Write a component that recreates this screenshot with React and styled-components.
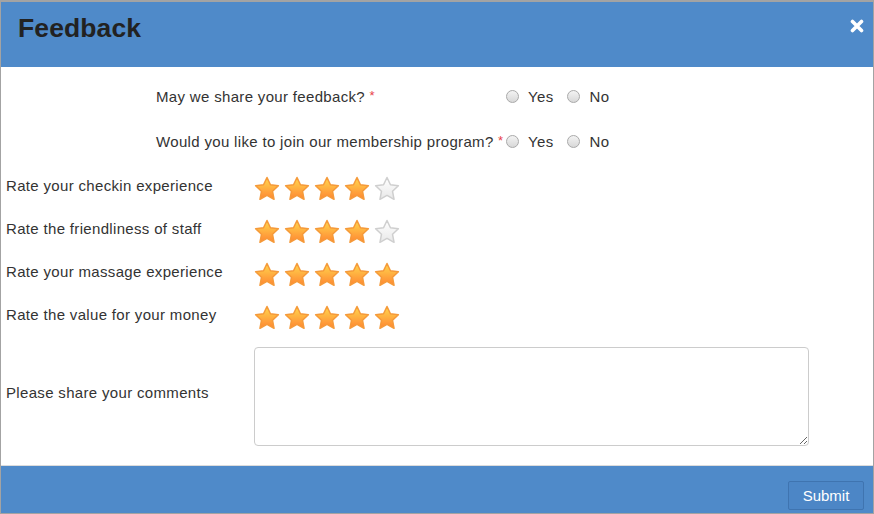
import React, { useState } from 'react';
import styled, { createGlobalStyle } from 'styled-components';

const GlobalStyle = createGlobalStyle`
    html, body {
        margin: 0;
        padding: 0;
        background: #fff;
    }
    body {
        font-family: "Liberation Sans", Arial, sans-serif;
        color: #333;
    }
`;

const questions = [
    { id: 'share', text: 'May we share your feedback?' },
    { id: 'member', text: 'Would you like to join our membership program?' },
];

const ratings = [
    { id: 'checkin', text: 'Rate your checkin experience', value: 4 },
    { id: 'staff', text: 'Rate the friendliness of staff', value: 4 },
    { id: 'massage', text: 'Rate your massage experience', value: 5 },
    { id: 'money', text: 'Rate the value for your money', value: 5 },
];

function Star({ on, uid }) {
    const gid = `star-${uid}`;
    return (
        <StarSvg viewBox="0 0 24 24" width="26" height="26">
            <defs>
                <linearGradient id={gid} x1="0" y1="0" x2="0" y2="1">
                    <stop offset="0" stopColor={on ? '#ffd84e' : '#ffffff'} />
                    <stop offset="1" stopColor={on ? '#ff8632' : '#e8e8e8'} />
                </linearGradient>
            </defs>
            <polygon
                points="12,1.4 15.2,8.1 22.5,9 17.1,14.1 18.5,21.5 12,17.9 5.5,21.5 6.9,14.1 1.5,9 8.8,8.1"
                fill={`url(#${gid})`}
                stroke={on ? '#f59a3a' : '#cfcfcf'}
                strokeWidth="1.4"
                strokeLinejoin="round"
            />
        </StarSvg>
    );
}

function Radio({ label, checked, onClick }) {
    return (
        <RadioLabel onClick={onClick}>
            <RadioDot $checked={checked} />
            {label}
        </RadioLabel>
    );
}

function App() {
    const [answers, setAnswers] = useState({});
    const [comment, setComment] = useState('');

    return (
        <>
            <GlobalStyle />
            <Dialog>
                <Header>
                    <Title>Feedback</Title>
                    <CloseBtn aria-label="close">
                        <svg viewBox="0 0 14 14" width="14" height="14">
                            <path d="M2.5 2.5 L11.5 11.5 M11.5 2.5 L2.5 11.5" stroke="#fff" strokeWidth="3.6" strokeLinecap="round" />
                        </svg>
                    </CloseBtn>
                </Header>

                <Body>
                    {questions.map(q => (
                        <QuestionRow key={q.id}>
                            <QuestionLabel>
                                {q.text} <Required>*</Required>
                            </QuestionLabel>
                            <RadioGroup>
                                <Radio label="Yes" checked={answers[q.id] === 'yes'} onClick={() => setAnswers({ ...answers, [q.id]: 'yes' })} />
                                <Radio label="No" checked={answers[q.id] === 'no'} onClick={() => setAnswers({ ...answers, [q.id]: 'no' })} />
                            </RadioGroup>
                        </QuestionRow>
                    ))}

                    {ratings.map(r => (
                        <RatingRow key={r.id}>
                            <RowLabel>{r.text}</RowLabel>
                            <Stars>
                                {[1, 2, 3, 4, 5].map(n => (
                                    <Star key={n} on={n <= r.value} uid={`${r.id}-${n}`} />
                                ))}
                            </Stars>
                        </RatingRow>
                    ))}

                    <CommentRow>
                        <RowLabel $lift>Please share your comments</RowLabel>
                        <Comment value={comment} onChange={e => setComment(e.currentTarget.value)} />
                    </CommentRow>
                </Body>

                <Footer>
                    <SubmitBtn>Submit</SubmitBtn>
                </Footer>
            </Dialog>
        </>
    );
}

export default App;

const Dialog = styled.div`
    width: 874px;
    height: 514px;
    box-sizing: border-box;
    border: 1px solid #a3a3a3;
    border-top-width: 2px;
    display: flex;
    flex-direction: column;
    background: #fff;
`;

const Header = styled.div`
    height: 65px;
    background: #4f8ac9;
    display: flex;
    align-items: flex-start;
    justify-content: space-between;
    padding: 0 8px 0 17px;
`;

const Title = styled.h1`
    margin: 0;
    padding-top: 11px;
    font-size: 26.5px;
    font-weight: 700;
    color: #222;
    letter-spacing: 0.1px;
`;

const CloseBtn = styled.button`
    border: none;
    background: none;
    padding: 0;
    margin-top: 16px;
    width: 16px;
    height: 16px;
    display: flex;
    align-items: center;
    justify-content: center;
    cursor: pointer;
`;

const Body = styled.div`
    flex: 1;
    padding-top: 7px;
    font-size: 15px;
    letter-spacing: 0.33px;
`;

const QuestionRow = styled.div`
    height: 45px;
    display: flex;
    align-items: center;
    padding-left: 155px;
`;

const QuestionLabel = styled.div`
    width: 350px;
    white-space: nowrap;
`;

const Required = styled.span`
    color: #e8414a;
    font-size: 13px;
    position: relative;
    top: -2px;
`;

const RadioGroup = styled.div`
    display: flex;
    align-items: center;
    gap: 14px;
`;

const RadioLabel = styled.label`
    display: flex;
    align-items: center;
    gap: 9px;
    cursor: pointer;
`;

const RadioDot = styled.span`
    width: 11px;
    height: 11px;
    border-radius: 50%;
    border: 1px solid #a9a9a9;
    background: ${p => (p.$checked ? 'radial-gradient(circle, #333 30%, #e8e8e8 36%)' : 'linear-gradient(#f3f3f3, #d8d8d8)')};
`;

const RatingRow = styled.div`
    height: 43px;
    display: flex;
    align-items: center;
    padding-left: 5px;
`;

const RowLabel = styled.div`
    width: 248px;
    white-space: nowrap;
    padding-bottom: ${p => (p.$lift ? '8px' : '0')};
`;

const Stars = styled.div`
    display: flex;
    gap: 4px;
    margin-top: 7px;
`;

const StarSvg = styled.svg`
    display: block;
`;

const CommentRow = styled.div`
    display: flex;
    align-items: center;
    padding-left: 5px;
    margin-top: 11px;
`;

const Comment = styled.textarea`
    width: 555px;
    height: 99px;
    box-sizing: border-box;
    border: 1px solid #cccccc;
    border-radius: 4px;
    font-family: inherit;
    font-size: 14px;
    padding: 6px;
    &:focus {
        outline: none;
        border-color: #66afe9;
    }
`;

const Footer = styled.div`
    border-top: 1px solid #dcdcdc;
    height: 48px;
    background: #4f8ac9;
    display: flex;
    justify-content: flex-end;
    align-items: flex-start;
    padding: 15px 9px 0 0;
    box-sizing: border-box;
`;

const SubmitBtn = styled.button`
    width: 76px;
    height: 29px;
    background: #4c86c6;
    border: 1px solid #3f74b0;
    border-radius: 2px;
    color: #fff;
    font-family: "Liberation Sans", Arial, sans-serif;
    font-size: 15px;
    cursor: pointer;
    &:hover {
        background: #4479b5;
    }
`;
